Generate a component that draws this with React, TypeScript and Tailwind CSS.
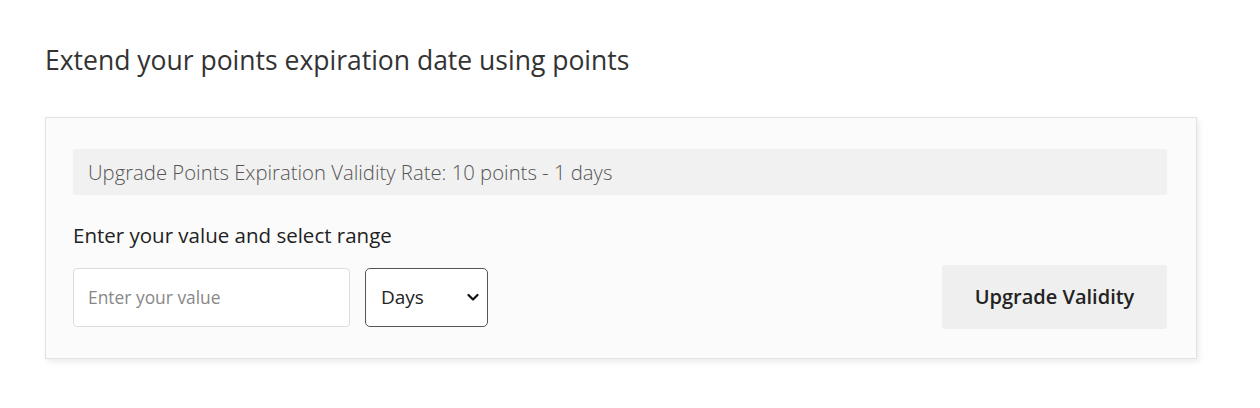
import React from "react"

const App = () => {
  return (
    <div className="w-[1260px] h-[408px] bg-white font-['Open_Sans',sans-serif] pt-[41px] pl-[45px]">
      <h2 className="text-[26.5px] leading-[38px] text-[#333] font-normal">Extend your points expiration date using points</h2>
      <div className="mt-[38px] w-[1152px] border border-[#e2e2e2] bg-[#fbfbfb] shadow-[2px_3px_6px_rgba(0,0,0,0.08)] pl-[27px] pr-[29px] pt-[31px] pb-[29px]">
        <div className="h-[46px] bg-[#f1f1f1] rounded-[3px] flex items-center pl-[15px] text-[20.3px] text-[#555] font-light">
          Upgrade Points Expiration Validity Rate: 10 points - 1 days
        </div>
        <div className="mt-[27px] text-[20.5px] leading-[26px] text-[#222]">Enter your value and select range</div>
        <div className="mt-[17px] flex items-center justify-between">
          <div className="flex items-center gap-[15px]">
            <input
              type="text"
              className="w-[277px] h-[59px] border border-[#dcdcdc] rounded-[4px] bg-white pl-[14px] text-[17.4px] text-[#333] outline-none placeholder:text-[#888]"
              placeholder="Enter your value"
            />
            <div className="relative w-[123px] h-[59px] border border-[#555] rounded-[5px] bg-white flex items-center pl-[15px] text-[19px] text-[#222]">
              Days
              <svg className="absolute right-[8px] top-[24px]" width="12" height="9" viewBox="0 0 12 9">
                <path d="M1.5 2 L6 6.5 L10.5 2" fill="none" stroke="#111" strokeWidth="2.2" strokeLinecap="round" strokeLinejoin="round" />
              </svg>
            </div>
          </div>
          <button className="w-[225px] h-[64px] bg-[#efefef] rounded-[3px] text-[20px] font-semibold text-[#222]">Upgrade Validity</button>
        </div>
      </div>
    </div>
  )
}

export default App
